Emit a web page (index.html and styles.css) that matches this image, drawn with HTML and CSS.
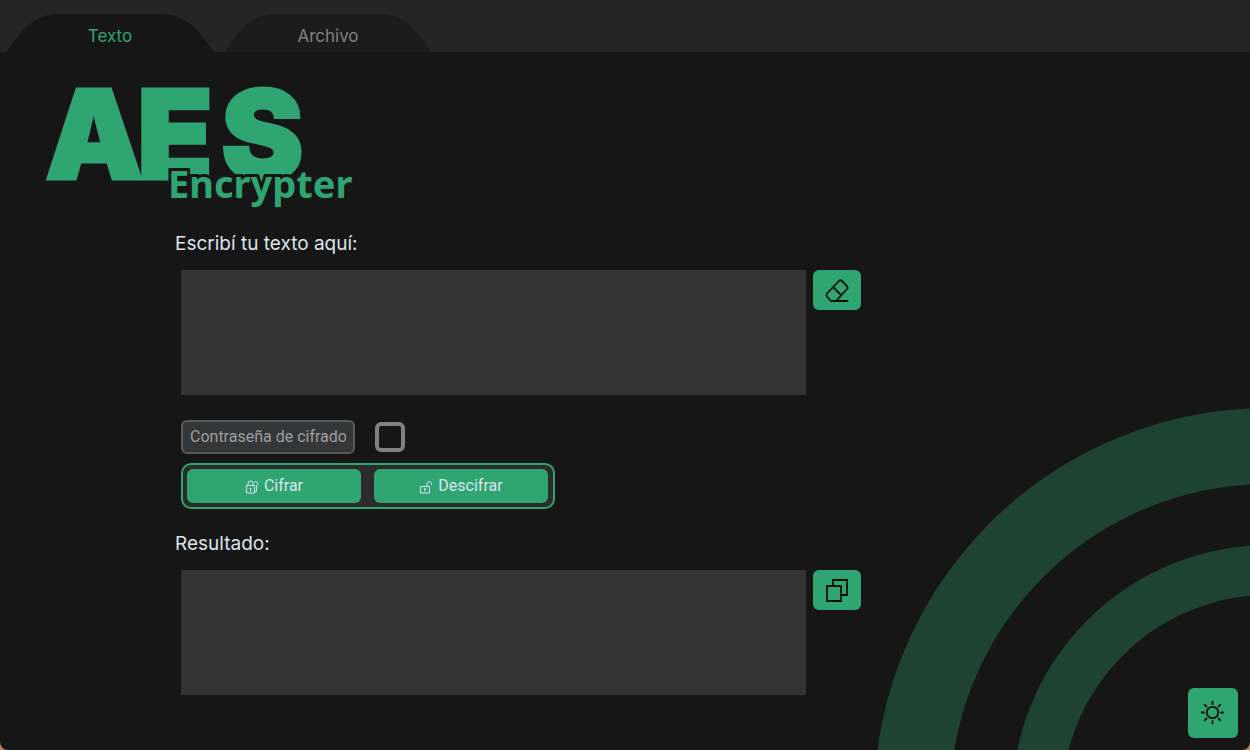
FILE: index.html
```html
<!DOCTYPE html>
<html lang="es">
<head>
    <meta charset="UTF-8">
    <meta name="viewport" content="width=device-width, initial-scale=1.0">
    <title>AES Encrypter</title>
    <link rel="stylesheet" href="styles.css">
</head>
<body>
    <div class="window">
        <svg class="rings" viewBox="0 0 380 350" aria-hidden="true">
            <circle cx="398" cy="402" r="356" stroke-width="76"/>
            <circle cx="399" cy="402" r="232" stroke-width="50"/>
        </svg>

        <nav class="tabs">
            <button type="button" class="tab active">Texto</button>
            <button type="button" class="tab">Archivo</button>
        </nav>

        <main class="content">
            <h1 class="logo">
                <svg viewBox="0 0 330 140" role="img" aria-label="AES Encrypter">
                    <text class="logo-big" x="5 97 181" y="109">AES</text>
                    <text class="logo-small" x="128" y="128">Encrypter</text>
                </svg>
            </h1>

            <form class="form">
                <label for="texto">Escribí tu texto aquí:</label>
                <div class="field">
                    <textarea id="texto"></textarea>
                    <button type="button" class="icon-button" aria-label="Borrar">
                        <svg width="26" height="26" viewBox="0 0 26 26">
                            <path d="M3 16.500 15 4Q16.500 2.500 18 4L23 9Q24.200 10.500 23 12L12 24H7L3 19.500Q1.700 18 3 16.500ZM9.500 10.500 17 18M7 24H23.500"/>
                        </svg>
                    </button>
                </div>

                <div class="password">
                    <input type="password" class="password-input" placeholder="Contraseña de cifrado" aria-label="Contraseña de cifrado">
                    <input type="checkbox" class="show-password" aria-label="Mostrar contraseña">
                </div>

                <div class="actions">
                    <button type="button" class="action">
                        <svg width="14" height="14" viewBox="0 0 14 14">
                            <path d="M1.500 5.500H9.500V13H1.500ZM3 5.500V3.500A2.500 2.500 0 0 1 8 3.500V5.500M5.500 8V11M4.500 8.500H6.500M9 3A2 2 0 1 1 11.500 5.500V11.500H9.500"/>
                        </svg>
                        Cifrar
                    </button>
                    <button type="button" class="action">
                        <svg width="14" height="14" viewBox="0 0 14 14">
                            <path d="M1.500 6.500H10.500V13H1.500ZM8 6.500V3.500A2.300 2.300 0 0 1 12.500 3.500V5M6 8.500V11.500M5 9H7"/>
                        </svg>
                        Descifrar
                    </button>
                </div>

                <label for="resultado">Resultado:</label>
                <div class="field">
                    <textarea id="resultado"></textarea>
                    <button type="button" class="icon-button" aria-label="Copiar">
                        <svg width="26" height="26" viewBox="0 0 26 26">
                            <path d="M3 9H17V24H3ZM9 9V3H23V18H17"/>
                        </svg>
                    </button>
                </div>
            </form>
        </main>

        <button type="button" class="theme-button" aria-label="Cambiar tema">
            <svg width="26" height="26" viewBox="0 0 26 26">
                <circle cx="12.500" cy="12.500" r="5.700"/>
                <path d="M12.500 1.700V4.200M12.500 20.800V23.300M1.700 12.500H4.200M20.800 12.500H23.300M4.700 4.700 6.500 6.500M18.500 18.500 20.300 20.300M4.700 20.300 6.500 18.500M18.500 6.500 20.300 4.700"/>
            </svg>
        </button>
    </div>
</body>
</html>
```

FILE: styles.css
```css
* {
    box-sizing: border-box;
}
body {
    margin: 0;
    background: #b08463;
    font-family: Roboto, sans-serif;
    font-size: 16px;
    color: #dce4ee;
}
button {
    border: none;
    padding: 0;
    font: inherit;
    color: inherit;
    cursor: pointer;
}
.window {
    position: relative;
    min-height: 100vh;
    background: #161616;
    border-radius: 0 0 8px 8px;
    overflow: hidden;
}

/* Background rings in the bottom corner */
.rings {
    position: absolute;
    right: 0;
    bottom: 0;
    width: 380px;
    height: 350px;
    fill: none;
    stroke: #1e4332;
}

/* Tabs */
.tabs {
    display: flex;
    gap: 10px;
    padding: 14px 6px 0;
    background: #252525;
}
.tab {
    width: 208px;
    height: 38px;
    padding-top: 6px;
    background: #1c1c1c;
    clip-path: path("M0 38 L13 21 Q30 0 52 0 H156 Q178 0 195 21 L208 38 Z");
    font-family: Inter, sans-serif;
    font-size: 17px;
    color: #808080;
}
.tab.active {
    background: #161616;
    color: #2fa572;
}

/* Content */
.content {
    position: relative;
}
.logo {
    margin: 0;
    padding: 18px 0 0 40px;
}
.logo svg {
    display: block;
    width: 330px;
    height: 140px;
    fill: #2fa572;
    overflow: visible;
}
.logo-big {
    font-family: Inter, sans-serif;
    font-size: 124px;
    font-weight: 900;
    stroke: #2fa572;
    stroke-width: 3px;
}
.logo-small {
    font-family: "Noto Sans", sans-serif;
    font-size: 38px;
    font-weight: 700;
    stroke: #161616;
    stroke-width: 6px;
    paint-order: stroke;
}
.form {
    padding: 20px 0 30px 14%;
}
.form label {
    display: block;
    font-family: Inter, sans-serif;
    font-size: 19px;
    line-height: 28px;
}
.field {
    display: flex;
    align-items: flex-start;
    gap: 7px;
    padding: 12px 6px 25px;
}
.field textarea {
    width: 50vw;
    height: 125px;
    padding: 6px;
    border: none;
    background: #333333;
    color: #dce4ee;
    font: inherit;
    resize: none;
}
.icon-button {
    display: grid;
    place-items: center;
    width: 48px;
    height: 40px;
    border-radius: 6px;
    background: #2fa572;
}
.icon-button svg,
.theme-button svg {
    fill: none;
    stroke: #0a0f0c;
    stroke-width: 1.8;
    stroke-linecap: round;
}
.password {
    display: flex;
    align-items: center;
    gap: 20px;
    padding-left: 6px;
}
.password-input {
    width: 174px;
    height: 34px;
    padding: 0 7px 2px;
    border: 2px solid #565b5e;
    border-radius: 6px;
    background: #343638;
    color: #dce4ee;
    font: inherit;
}
.password-input::placeholder {
    color: #9e9e9e;
}
.show-password {
    appearance: none;
    width: 30px;
    height: 30px;
    margin: 0;
    border: 4px solid #808080;
    border-radius: 6px;
}
.show-password:checked {
    background: #2fa572;
}
.actions {
    display: flex;
    gap: 13px;
    width: fit-content;
    margin: 9px 6px 21px;
    padding: 4px 5px 4px 4px;
    border: 2px solid #2fa572;
    border-radius: 10px;
    background: #2b2b2b;
}
.action {
    display: flex;
    align-items: center;
    justify-content: center;
    gap: 5px;
    width: 174px;
    height: 34px;
    padding-bottom: 2px;
    border-radius: 6px;
    background: #2fa572;
}
.action svg {
    margin-top: 4px;
    fill: none;
    stroke: #dce4ee;
    stroke-width: 1;
}
.theme-button {
    position: absolute;
    right: 12px;
    bottom: 12px;
    display: grid;
    place-items: center;
    width: 50px;
    height: 50px;
    border-radius: 6px;
    background: #2fa572;
}
```
